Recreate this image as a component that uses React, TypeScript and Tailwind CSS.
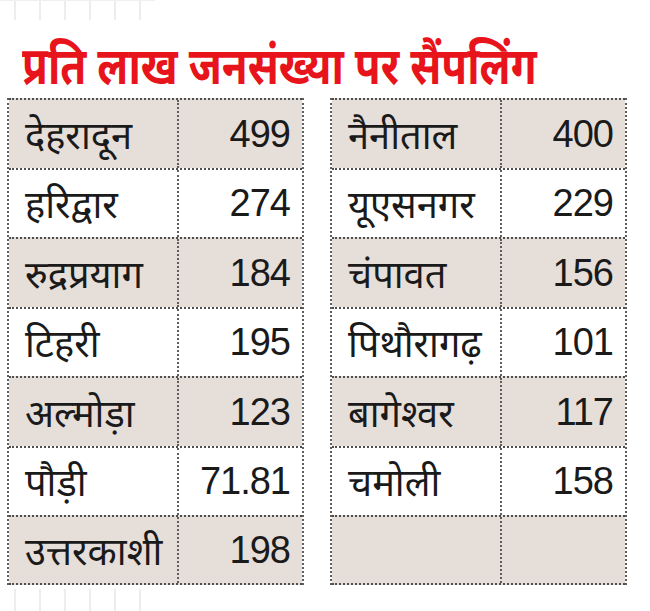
const left: [string, string][] = [
  ['देहरादून', '499'],
  ['हरिद्वार', '274'],
  ['रुद्रप्रयाग', '184'],
  ['टिहरी', '195'],
  ['अल्मोड़ा', '123'],
  ['पौड़ी', '71.81'],
  ['उत्तरकाशी', '198'],
]

const right: [string, string][] = [
  ['नैनीताल', '400'],
  ['यूएसनगर', '229'],
  ['चंपावत', '156'],
  ['पिथौरागढ़', '101'],
  ['बागेश्वर', '117'],
  ['चमोली', '158'],
  ['', ''],
]

// faint tick marks bleeding in from the scanned page
function Ticks() {
  return (
    <div className="flex h-full gap-[23px] pl-[14px]">
      {[0, 1, 2, 3, 4, 5].map((n) => (
        <div key={n} className="h-full w-[2px] bg-[#ededed]" />
      ))}
    </div>
  )
}

function Table({ rows }: { rows: [string, string][] }) {
  return (
    <div className="flex w-[297px] flex-col border-x-2 border-dotted border-[#5e5e5e]">
      {rows.map(([name, value], i) => (
        <div
          key={i}
          className={`grid h-[69.5px] grid-cols-[170px_1fr] border-t-2 border-dotted border-[#4f4f4f] last:border-b-2 ${i % 2 === 0 ? 'bg-[#e6ded9]' : 'bg-white'}`}
        >
          <div className="flex items-center border-r-2 border-dotted border-[#5e5e5e] pl-[16px] text-[38px] leading-none text-[#1a1a1a]">
            {name}
          </div>
          <div className="flex items-center justify-end pr-[12px] font-['Liberation_Sans',sans-serif] text-[38px] leading-none tracking-[-1px] text-[#1a1a1a]">
            {value}
          </div>
        </div>
      ))}
    </div>
  )
}

export default function App() {
  return (
    <div className="h-[611px] w-[650px] overflow-hidden bg-white font-['Noto_Sans',sans-serif]">
      <div className="h-[20px] border-t border-[#f0f0f0] w-[155px]">
        <Ticks />
      </div>
      <div className="flex h-[78px] items-end pb-[8px] pl-[22px]">
        <h1 className="origin-left scale-x-[0.81] whitespace-nowrap text-[52px] font-bold leading-none text-[#e8141c]">
          प्रति लाख जनसंख्या पर सैंपलिंग
        </h1>
      </div>
      <div className="flex gap-[26px] pl-[7px]">
        <Table rows={left} />
        <Table rows={right} />
      </div>
      <div className="mt-[4px] h-[24px] w-[155px]">
        <Ticks />
      </div>
    </div>
  )
}
